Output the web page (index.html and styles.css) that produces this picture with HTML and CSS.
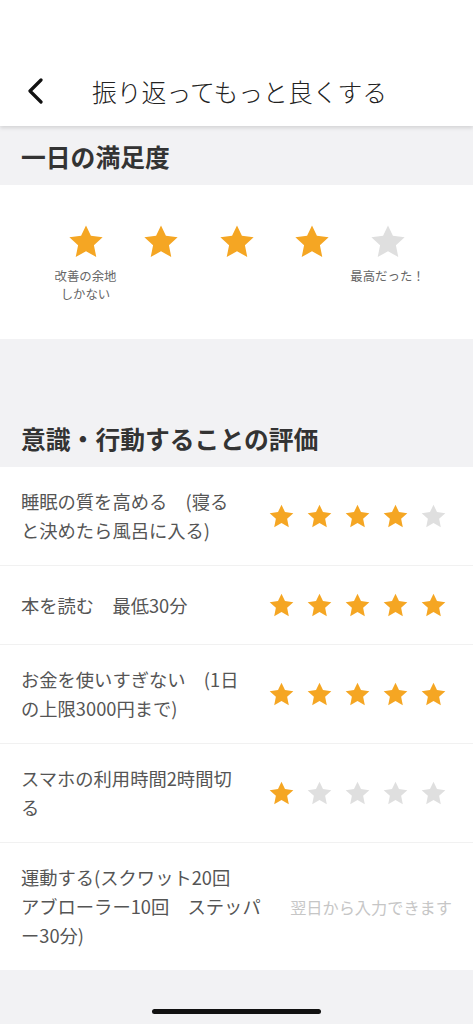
FILE: index.html
```html
<!DOCTYPE html>
<html lang="ja">
<head>
    <meta charset="UTF-8">
    <meta name="viewport" content="width=device-width, initial-scale=1.0">
    <title>振り返ってもっと良くする</title>
    <link rel="stylesheet" href="styles.css">
</head>
<body>
    <svg width="0" height="0" class="defs">
        <symbol id="star" viewBox="0 0 24 24">
            <polygon points="12,1.5 15.1,8.1 22.5,9 17,14.1 18.5,21.5 12,17.8 5.5,21.5 7,14.1 1.5,9 8.9,8.1"/>
        </symbol>
    </svg>

    <div class="header">
        <div class="header-bar">
            <svg class="back" width="18" height="26" viewBox="0 0 18 26">
                <polyline points="15,2 4,13 15,24" fill="none" stroke="#111" stroke-width="3.2" stroke-linecap="round" stroke-linejoin="round"/>
            </svg>
            <div class="title">振り返ってもっと良くする</div>
        </div>
    </div>

    <!-- 一日の満足度 -->
    <div class="section-head">一日の満足度</div>
    <div class="satisfaction">
        <div class="sat-item">
            <svg class="star on big"><use href="#star"/></svg>
            <div class="sat-label">改善の余地<br>しかない</div>
        </div>
        <div class="sat-item"><svg class="star on big"><use href="#star"/></svg></div>
        <div class="sat-item"><svg class="star on big"><use href="#star"/></svg></div>
        <div class="sat-item"><svg class="star on big"><use href="#star"/></svg></div>
        <div class="sat-item">
            <svg class="star off big"><use href="#star"/></svg>
            <div class="sat-label">最高だった！</div>
        </div>
    </div>

    <div class="spacer"></div>

    <!-- 意識・行動することの評価 -->
    <div class="section-head">意識・行動することの評価</div>
    <div class="rows">
        <div class="row">
            <div class="row-text">睡眠の質を高める　(寝ると決めたら風呂に入る)</div>
            <div class="stars">
                <svg class="star on"><use href="#star"/></svg>
                <svg class="star on"><use href="#star"/></svg>
                <svg class="star on"><use href="#star"/></svg>
                <svg class="star on"><use href="#star"/></svg>
                <svg class="star off"><use href="#star"/></svg>
            </div>
        </div>
        <div class="row">
            <div class="row-text">本を読む　最低30分</div>
            <div class="stars">
                <svg class="star on"><use href="#star"/></svg>
                <svg class="star on"><use href="#star"/></svg>
                <svg class="star on"><use href="#star"/></svg>
                <svg class="star on"><use href="#star"/></svg>
                <svg class="star on"><use href="#star"/></svg>
            </div>
        </div>
        <div class="row">
            <div class="row-text">お金を使いすぎない　(1日の上限3000円まで)</div>
            <div class="stars">
                <svg class="star on"><use href="#star"/></svg>
                <svg class="star on"><use href="#star"/></svg>
                <svg class="star on"><use href="#star"/></svg>
                <svg class="star on"><use href="#star"/></svg>
                <svg class="star on"><use href="#star"/></svg>
            </div>
        </div>
        <div class="row">
            <div class="row-text">スマホの利用時間2時間切る</div>
            <div class="stars">
                <svg class="star on"><use href="#star"/></svg>
                <svg class="star off"><use href="#star"/></svg>
                <svg class="star off"><use href="#star"/></svg>
                <svg class="star off"><use href="#star"/></svg>
                <svg class="star off"><use href="#star"/></svg>
            </div>
        </div>
        <div class="row">
            <div class="row-text">運動する(スクワット20回<br>アブローラー10回　ステッパー30分)</div>
            <div class="later">翌日から入力できます</div>
        </div>
    </div>

    <div class="footer">
        <div class="home-bar"></div>
    </div>
</body>
</html>
```

FILE: styles.css
```css
body {
    margin: 0;
    background-color: #f2f2f4;
    font-family: "Noto Sans CJK JP", "Noto Sans", sans-serif;
    color: #333;
}
.defs {
    position: absolute;
}
.header {
    position: relative;
    z-index: 1;
    background-color: #fff;
    padding-top: 56px;
    box-shadow: 0 2px 4px rgba(0, 0, 0, 0.13);
}
.header-bar {
    height: 70px;
    display: flex;
    align-items: center;
}
.back {
    margin-left: 26px;
    margin-right: 48px;
}
.title {
    font-size: 24.8px;
    color: #222;
    font-weight: 300;
}
.section-head {
    height: 59px;
    padding-left: 21px;
    display: flex;
    align-items: center;
    font-size: 24.8px;
    font-weight: 700;
    color: #333;
}
.satisfaction {
    background-color: #fff;
    display: flex;
    justify-content: center;
    align-items: flex-start;
    padding: 38px 0 0;
    height: 116px;
}
.sat-item {
    width: 75.5px;
    display: flex;
    flex-direction: column;
    align-items: center;
}
.star {
    width: 27px;
    height: 27px;
}
.star.big {
    width: 38px;
    height: 38px;
}
.star.on {
    fill: #f5a623;
}
.star.off {
    fill: #dfdfdf;
}
.sat-label {
    margin-top: 6px;
    font-size: 12.4px;
    line-height: 18px;
    color: #666;
    text-align: center;
    white-space: nowrap;
}
.spacer {
    height: 69px;
}
.rows {
    background-color: #fff;
}
.row {
    display: flex;
    align-items: center;
    min-height: 79px;
    box-sizing: border-box;
    padding: 20px 0 20px 21px;
    border-bottom: 1px solid #f1f1f1;
}
.row:last-child {
    border-bottom: none;
}
.row-text {
    flex: 1;
    margin-right: 22px;
    font-size: 18.3px;
    line-height: 29px;
    color: #555;
    line-break: loose;
}
.stars {
    display: flex;
    gap: 11px;
    margin-right: 26px;
}
.later {
    font-size: 16.2px;
    color: #c6c6c6;
    margin-right: 21px;
    white-space: nowrap;
}
.footer {
    height: 56px;
    display: flex;
    justify-content: center;
    align-items: flex-end;
}
.home-bar {
    width: 169px;
    height: 5px;
    border-radius: 3px;
    background-color: #111;
    margin-bottom: 12px;
}
```
